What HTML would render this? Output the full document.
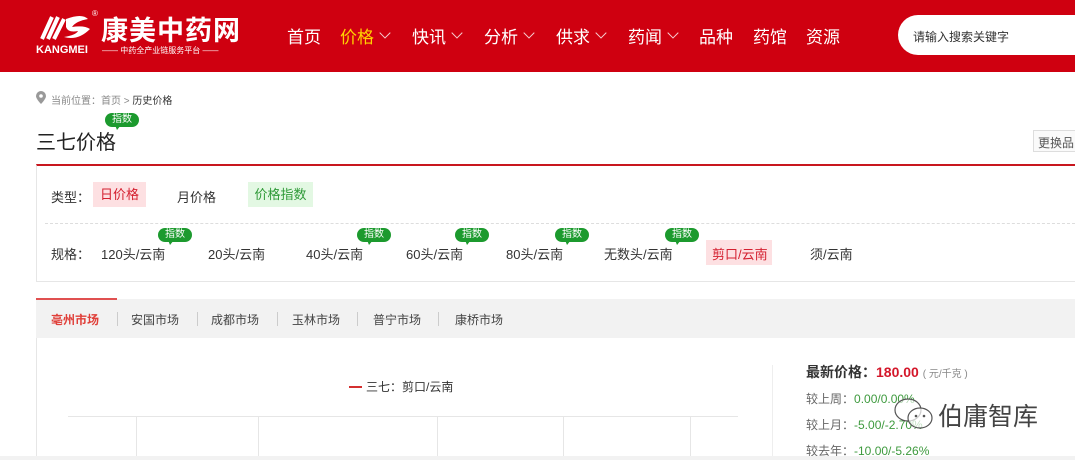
<!DOCTYPE html><html><head><meta charset="utf-8"><style>
*{margin:0;padding:0;box-sizing:border-box}
body{width:1075px;height:460px;overflow:hidden;background:#fff;font-family:"Liberation Sans","Noto Sans CJK SC",sans-serif;position:relative;color:#333}
.a{position:absolute;white-space:nowrap}
.hd{position:absolute;left:0;top:0;width:1075px;height:72px;background:#cf0010}
.nav{color:#fff;font-size:17px;top:23px}
.nav i{display:inline-block;width:8px;height:8px;border-right:1px solid rgba(255,255,255,.8);border-bottom:1px solid rgba(255,255,255,.8);transform:rotate(45deg);margin-left:7px;vertical-align:6px}
.bd{background:#1c9a2e;color:#fff;font-size:10px;border-radius:8px;width:34px;height:14px;line-height:14px;text-align:center}
.bd:after{content:"";position:absolute;left:10px;top:12px;border:4px solid transparent;border-top:5px solid #1c9a2e;border-left:2px solid transparent}
.sp{font-size:13px;top:244px;color:#333}
.tab{font-size:12px;top:311px;color:#444}
.sep{top:312px;width:1px;height:14px;background:#ccc}
.vl{width:1px;background:#e6e6e6;top:416px;height:44px}
.g{color:#3e9a3e}
</style></head><body>
<div class="hd"></div>
<svg class="a" style="left:38px;top:11px" width="56" height="32" viewBox="0 0 56 32"><path d="M4 28 L14 6 M10 28 L20 6 M16 28 L26 8" stroke="#fff" stroke-width="4" fill="none"/><path d="M28 8 Q44 2 50 8 Q38 10 34 16 Q46 14 52 18 Q40 30 26 26 Q38 24 40 20 Q30 22 28 16 Z" fill="#fff"/></svg>
<div class="a" style="left:92px;top:9px;color:#fff;font-size:8px">®</div>
<div class="a" style="left:101px;top:9px;color:#fff;font-size:27px;font-weight:bold;letter-spacing:1px">康美中药网</div>
<div class="a" style="left:36px;top:44px;color:#fff;font-size:11px;font-weight:bold">KANGMEI</div>
<div class="a" style="left:102px;top:45px;color:#fff;font-size:8px">—— 中药全产业链服务平台 ——</div>
<div class="a nav" style="left:287px">首页</div>
<div class="a nav" style="left:340px;color:#ffd200">价格<i></i></div>
<div class="a nav" style="left:412px">快讯<i></i></div>
<div class="a nav" style="left:484px">分析<i></i></div>
<div class="a nav" style="left:556px">供求<i></i></div>
<div class="a nav" style="left:628px">药闻<i></i></div>
<div class="a nav" style="left:699px">品种</div>
<div class="a nav" style="left:753px">药馆</div>
<div class="a nav" style="left:806px">资源</div>
<div class="a" style="left:898px;top:15px;width:200px;height:40px;background:#fff;border-radius:20px"></div>
<div class="a" style="left:913px;top:28px;font-size:12px;color:#333">请输入搜索关键字</div>
<svg class="a" style="left:36px;top:91px" width="10" height="13" viewBox="0 0 10 13"><path d="M5 0a5 5 0 0 0-5 5c0 3 5 8 5 8s5-5 5-8a5 5 0 0 0-5-5z" fill="#999"/><circle cx="5" cy="5" r="1.8" fill="#fff"/></svg>
<div class="a" style="left:51px;top:92px;font-size:10px;color:#888">当前位置：首页 &gt; <span style="color:#333">历史价格</span></div>
<div class="a" style="left:36px;top:126px;font-size:20px;color:#222">三七价格</div>
<div class="a bd" style="left:105px;top:113px">指数</div>
<div class="a" style="left:1033px;top:130px;width:50px;height:22px;border:1px solid #ddd;font-size:12px;color:#555;padding:3px 4px;background:#fafafa">更换品</div>
<div class="a" style="left:36px;top:164px;width:1040px;height:118px;border:1px solid #e6e6e6;border-top:2px solid #c8161e;border-right:none"></div>
<div class="a" style="left:51px;top:187px;font-size:13px">类型：</div>
<div class="a" style="left:93px;top:182px;width:53px;height:25px;background:#fde0e2;color:#d42030;font-size:13px;text-align:center;line-height:25px">日价格</div>
<div class="a" style="left:177px;top:187px;font-size:13px">月价格</div>
<div class="a" style="left:248px;top:182px;width:65px;height:25px;background:#e3f8e3;color:#2f9a38;font-size:13px;text-align:center;line-height:25px">价格指数</div>
<div class="a" style="left:45px;top:223px;width:1030px;border-top:1px dashed #ddd"></div>
<div class="a sp" style="left:51px">规格：</div>
<div class="a sp" style="left:101px">120头/云南</div>
<div class="a sp" style="left:208px">20头/云南</div>
<div class="a sp" style="left:306px">40头/云南</div>
<div class="a sp" style="left:406px">60头/云南</div>
<div class="a sp" style="left:506px">80头/云南</div>
<div class="a sp" style="left:604px">无数头/云南</div>
<div class="a" style="left:706px;top:240px;width:66px;height:25px;background:#fde0e2"></div>
<div class="a sp" style="left:712px;color:#d42030">剪口/云南</div>
<div class="a sp" style="left:810px">须/云南</div>
<div class="a bd" style="left:158px;top:228px">指数</div>
<div class="a bd" style="left:357px;top:228px">指数</div>
<div class="a bd" style="left:455px;top:228px">指数</div>
<div class="a bd" style="left:555px;top:228px">指数</div>
<div class="a bd" style="left:665px;top:228px">指数</div>
<div class="a" style="left:36px;top:299px;width:1040px;height:39px;background:#f2f2f2"></div>
<div class="a" style="left:36px;top:298px;width:81px;height:2px;background:#e05050"></div>
<div class="a tab" style="left:51px;color:#e0403a;font-weight:bold">亳州市场</div>
<div class="a sep" style="left:117px"></div>
<div class="a tab" style="left:131px">安国市场</div>
<div class="a sep" style="left:197px"></div>
<div class="a tab" style="left:211px">成都市场</div>
<div class="a sep" style="left:277px"></div>
<div class="a tab" style="left:292px">玉林市场</div>
<div class="a sep" style="left:357px"></div>
<div class="a tab" style="left:373px">普宁市场</div>
<div class="a sep" style="left:438px"></div>
<div class="a tab" style="left:455px">康桥市场</div>
<div class="a" style="left:36px;top:338px;width:1px;height:122px;background:#e6e6e6"></div>
<div class="a" style="left:349px;top:386px;width:13px;height:2px;background:#d43030"></div>
<div class="a" style="left:366px;top:378px;font-size:12px;color:#333">三七：剪口/云南</div>
<div class="a" style="left:68px;top:416px;width:670px;height:1px;background:#e6e6e6"></div>
<div class="a vl" style="left:136px"></div><div class="a vl" style="left:258px"></div><div class="a vl" style="left:437px"></div><div class="a vl" style="left:563px"></div><div class="a vl" style="left:690px"></div>
<div class="a" style="left:772px;top:365px;width:1px;height:95px;background:#eee"></div>
<div class="a" style="left:806px;top:362px;font-size:14px;font-weight:bold;color:#333">最新价格：<span style="color:#d4172a">180.00</span> <span style="font-size:10px;color:#888;font-weight:normal">( 元/千克 )</span></div>
<div class="a" style="left:806px;top:390px;font-size:12px;color:#666">较上周：<span class="g">0.00/0.00%</span></div>
<div class="a" style="left:806px;top:416px;font-size:12px;color:#666">较上月：<span class="g">-5.00/-2.70%</span></div>
<div class="a" style="left:806px;top:442px;font-size:12px;color:#666">较去年：<span class="g">-10.00/-5.26%</span></div>
<div class="a" style="left:0;top:456px;width:1075px;height:4px;background:#f2f2f2"></div>
<svg class="a" style="left:893px;top:396px" width="42" height="36" viewBox="0 0 42 36"><ellipse cx="15" cy="14" rx="13" ry="11" fill="rgba(255,255,255,.6)" stroke="#555" stroke-width="1.2"/><ellipse cx="27" cy="22" rx="12" ry="10" fill="rgba(255,255,255,.7)" stroke="#555" stroke-width="1.2"/><circle cx="23" cy="20" r="1.3" fill="#555"/><circle cx="31" cy="20" r="1.3" fill="#555"/></svg>
<div class="a" style="left:938px;top:397px;font-size:25px;color:#444">伯庸智库</div>
</body></html>
